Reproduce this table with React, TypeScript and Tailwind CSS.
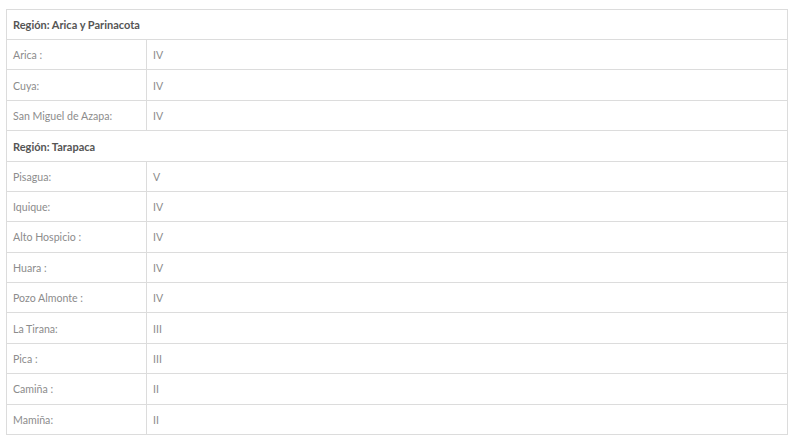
import React from "react";

type Row = { header: true; label: string } | { header?: false; label: string; value: string };

const rows: Row[] = [
  { header: true, label: "Región: Arica y Parinacota" },
  { label: "Arica :", value: "IV" },
  { label: "Cuya:", value: "IV" },
  { label: "San Miguel de Azapa:", value: "IV" },
  { header: true, label: "Región: Tarapaca" },
  { label: "Pisagua:", value: "V" },
  { label: "Iquique:", value: "IV" },
  { label: "Alto Hospicio :", value: "IV" },
  { label: "Huara :", value: "IV" },
  { label: "Pozo Almonte :", value: "IV" },
  { label: "La Tirana:", value: "III" },
  { label: "Pica :", value: "III" },
  { label: "Camiña :", value: "II" },
  { label: "Mamiña:", value: "II" },
];

export default function App() {
  return (
    <div className="w-[800px] h-[440px] bg-white pt-[9px] pl-[6px]" style={{ fontFamily: 'Lato, "Noto Sans", sans-serif' }}>
      <div className="w-[782px] border border-[#dcdcdc] flex flex-col">
        {rows.map((r, i) => (
          <div
            key={i}
            className={`flex items-center ${i > 0 ? "h-[30.38px] border-t border-[#dcdcdc]" : "h-[29px]"}`}
          >
            {r.header ? (
              <div className="pl-[6px] pt-[2px] text-[11px] font-bold text-[#555555]">{r.label}</div>
            ) : (
              <>
                <div className="w-[140px] h-full flex items-center pl-[6px] pt-[3px] border-r border-[#dcdcdc] text-[10.6px] text-[#8c8c8c]">
                  {r.label}
                </div>
                <div className="pl-[6px] pt-[3px] text-[10.6px] text-[#8c8c8c]">{r.value}</div>
              </>
            )}
          </div>
        ))}
      </div>
    </div>
  );
}
